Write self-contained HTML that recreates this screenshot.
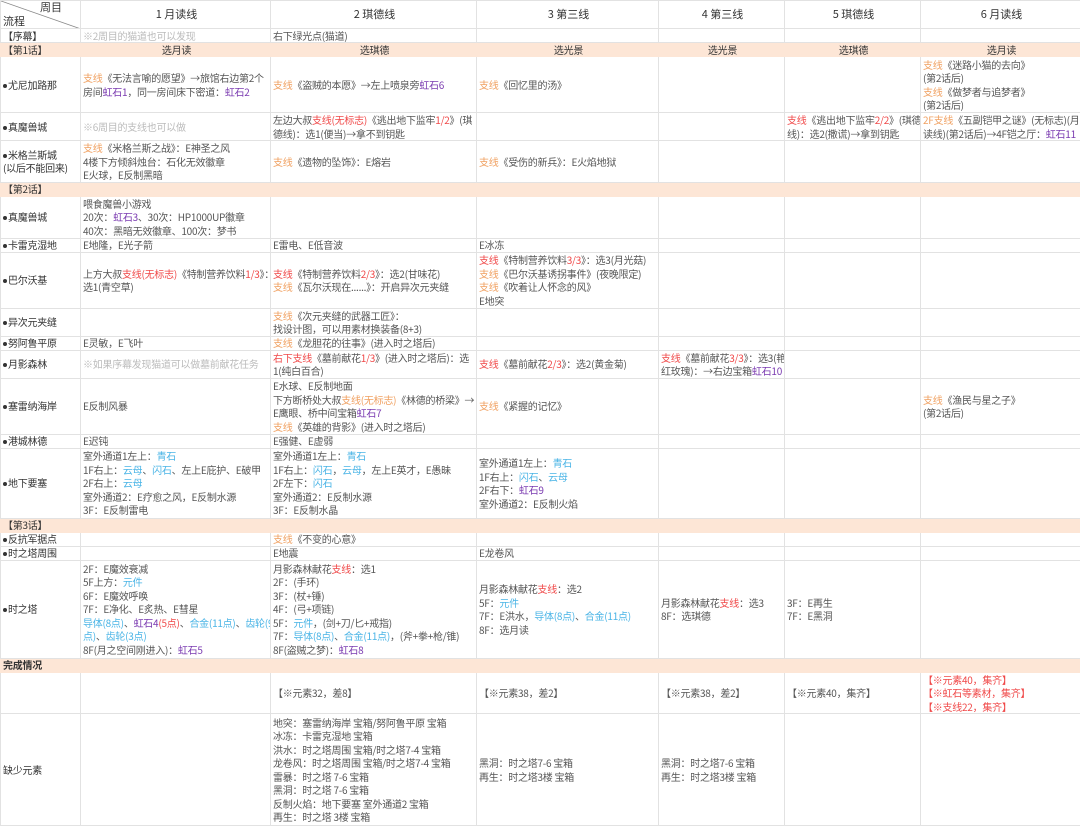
<!DOCTYPE html>
<html><head><meta charset="utf-8">
<style>
html,body{margin:0;padding:0;background:#fff;}
body{width:1080px;height:825px;overflow:hidden;font-family:"Noto Sans CJK SC",sans-serif;font-size:10px;color:#555;}
table{border-collapse:collapse;table-layout:fixed;width:1080px;}
td{border:1px solid #e2e2e2;padding:0 0 0 2px;vertical-align:middle;line-height:13.5px;white-space:nowrap;overflow:hidden;letter-spacing:-0.25px;}
tr.s td{line-height:12px;}
tr.sec td{background:#fde6d6;border-color:#fde6d6;color:#333;line-height:12px;}
.c{text-align:center;}
.o{color:#f0a060;}
.r{color:#f04848;}
.p{color:#7a3ab0;}
.b{color:#4ab4e6;}
.g{color:#bbb;}
.h td{font-size:11px;color:#333;text-align:center;letter-spacing:0;}
.first{color:#333;}
i{font-style:normal;display:inline-block;width:4px;height:4px;border-radius:50%;background:#333;margin:0 1px 1px 0;vertical-align:middle;}
</style></head><body>
<table>
<colgroup><col style="width:80px"><col style="width:190px"><col style="width:206px"><col style="width:182px"><col style="width:126px"><col style="width:136px"><col style="width:160px"></colgroup>
<tr class="h" style="height:28px"><td style="position:relative;padding:0;">
<svg width="80" height="28" style="position:absolute;left:0;top:0"><line x1="0" y1="0" x2="80" y2="28" stroke="#888" stroke-width="0.8"/></svg>
<span style="position:absolute;right:18px;top:0px;line-height:12px">周目</span><span style="position:absolute;left:2px;top:14px;line-height:12px">流程</span></td>
<td>1 月读线</td><td>2 琪德线</td><td>3 第三线</td><td>4 第三线</td><td>5 琪德线</td><td>6 月读线</td></tr>
<tr class="s" style="height:14px"><td class="first">【序幕】</td><td class="g">※2周目的猫道也可以发现</td><td>右下绿光点(猫道)</td><td></td><td></td><td></td><td></td></tr>
<tr class="sec" style="height:14px"><td>【第1话】</td><td class="c">选月读</td><td class="c">选琪德</td><td class="c">选光景</td><td class="c">选光景</td><td class="c">选琪德</td><td class="c">选月读</td></tr>
<tr style="height:56px"><td class="first"><i></i>尤尼加路那</td><td><span class="o">支线</span>《无法言喻的愿望》→旅馆右边第2个<br>房间<span class="p">虹石1</span>，同一房间床下密道：<span class="p">虹石2</span></td><td><span class="o">支线</span>《盗贼的本愿》→左上喷泉旁<span class="p">虹石6</span></td><td><span class="o">支线</span>《回忆里的汤》</td><td></td><td></td><td><span class="o">支线</span>《迷路小猫的去向》<br>(第2话后)<br><span class="o">支线</span>《做梦者与追梦者》<br>(第2话后)</td></tr>
<tr style="height:28px"><td class="first"><i></i>真魔兽城</td><td class="g">※6周目的支线也可以做</td><td>左边大叔<span class="r">支线(无标志)</span>《逃出地下监牢<span class="r">1/2</span>》(琪<br>德线)：选1(便当)→拿不到钥匙</td><td></td><td></td><td><span class="r">支线</span>《逃出地下监牢<span class="r">2/2</span>》(琪德<br>线)：选2(撒谎)→拿到钥匙</td><td><span class="o">2F支线</span>《五副铠甲之谜》(无标志)(月<br>读线)(第2话后)→4F铠之厅：<span class="p">虹石11</span></td></tr>
<tr style="height:41px"><td class="first"><i></i>米格兰斯城<br>(以后不能回来)</td><td><span class="o">支线</span>《米格兰斯之战》：E神圣之风<br>4楼下方倾斜烛台：石化无效徽章<br>E火球，E反制黑暗</td><td><span class="o">支线</span>《遗物的坠饰》：E熔岩</td><td><span class="o">支线</span>《受伤的新兵》：E火焰地狱</td><td></td><td></td><td></td></tr>
<tr class="sec" style="height:14px"><td>【第2话】</td><td></td><td></td><td></td><td></td><td></td><td></td></tr>
<tr style="height:42px"><td class="first"><i></i>真魔兽城</td><td>喂食魔兽小游戏<br>20次：<span class="p">虹石3</span>、30次：HP1000UP徽章<br>40次：黑暗无效徽章、100次：梦书</td><td></td><td></td><td></td><td></td><td></td></tr>
<tr class="s" style="height:14px"><td class="first"><i></i>卡雷克湿地</td><td>E地隆，E光子箭</td><td>E雷电、E低音波</td><td>E冰冻</td><td></td><td></td><td></td></tr>
<tr style="height:56px"><td class="first"><i></i>巴尔沃基</td><td>上方大叔<span class="r">支线(无标志)</span>《特制营养饮料<span class="r">1/3</span>》：<br>选1(青空草)</td><td><span class="r">支线</span>《特制营养饮料<span class="r">2/3</span>》：选2(甘味花)<br><span class="o">支线</span>《瓦尔沃现在......》：开启异次元夹缝</td><td><span class="r">支线</span>《特制营养饮料<span class="r">3/3</span>》：选3(月光菇)<br><span class="o">支线</span>《巴尔沃基诱拐事件》(夜晚限定)<br><span class="o">支线</span>《吹着让人怀念的风》<br>E地突</td><td></td><td></td><td></td></tr>
<tr style="height:28px"><td class="first"><i></i>异次元夹缝</td><td></td><td><span class="o">支线</span>《次元夹缝的武器工匠》：<br>找设计图，可以用素材换装备(8+3)</td><td></td><td></td><td></td><td></td></tr>
<tr class="s" style="height:14px"><td class="first"><i></i>努阿鲁平原</td><td>E灵敏，E飞叶</td><td><span class="o">支线</span>《龙胆花的往事》(进入时之塔后)</td><td></td><td></td><td></td><td></td></tr>
<tr style="height:28px"><td class="first"><i></i>月影森林</td><td class="g">※如果序幕发现猫道可以做墓前献花任务</td><td><span class="r">右下支线</span>《墓前献花<span class="r">1/3</span>》(进入时之塔后)：选<br>1(纯白百合)</td><td><span class="r">支线</span>《墓前献花<span class="r">2/3</span>》：选2(黄金菊)</td><td><span class="r">支线</span>《墓前献花<span class="r">3/3</span>》：选3(艳<br>红玫瑰)：→右边宝箱<span class="p">虹石10</span></td><td></td><td></td></tr>
<tr style="height:56px"><td class="first"><i></i>塞雷纳海岸</td><td>E反制风暴</td><td>E水球、E反制地面<br>下方断桥处大叔<span class="o">支线(无标志)</span>《林德的桥梁》→<br>E鹰眼、桥中间宝箱<span class="p">虹石7</span><br><span class="o">支线</span>《英雄的背影》(进入时之塔后)</td><td><span class="o">支线</span>《紧握的记忆》</td><td></td><td></td><td><span class="o">支线</span>《渔民与星之子》<br>(第2话后)</td></tr>
<tr class="s" style="height:14px"><td class="first"><i></i>港城林德</td><td>E迟钝</td><td>E强健、E虚弱</td><td></td><td></td><td></td><td></td></tr>
<tr style="height:70px"><td class="first"><i></i>地下要塞</td><td>室外通道1左上：<span class="b">青石</span><br>1F右上：<span class="b">云母</span>、<span class="b">闪石</span>、左上E庇护、E破甲<br>2F右上：<span class="b">云母</span><br>室外通道2：E疗愈之风，E反制水源<br>3F：E反制雷电</td><td>室外通道1左上：<span class="b">青石</span><br>1F右上：<span class="b">闪石</span>，<span class="b">云母</span>，左上E英才，E愚昧<br>2F左下：<span class="b">闪石</span><br>室外通道2：E反制水源<br>3F：E反制水晶</td><td>室外通道1左上：<span class="b">青石</span><br>1F右上：<span class="b">闪石</span>、<span class="b">云母</span><br>2F右下：<span class="p">虹石9</span><br>室外通道2：E反制火焰</td><td></td><td></td><td></td></tr>
<tr class="sec" style="height:14px"><td>【第3话】</td><td></td><td></td><td></td><td></td><td></td><td></td></tr>
<tr class="s" style="height:14px"><td class="first"><i></i>反抗军据点</td><td></td><td><span class="o">支线</span>《不变的心意》</td><td></td><td></td><td></td><td></td></tr>
<tr class="s" style="height:14px"><td class="first"><i></i>时之塔周围</td><td></td><td>E地震</td><td>E龙卷风</td><td></td><td></td><td></td></tr>
<tr style="height:98px"><td class="first"><i></i>时之塔</td><td>2F：E魔效衰减<br>5F上方：<span class="b">元件</span><br>6F：E魔效呼唤<br>7F：E净化、E炙热、E彗星<br><span class="b">导体(8点)</span>、<span class="p">虹石4</span><span class="r">(5点)</span>、<span class="b">合金(11点)</span>、<span class="b">齿轮(9</span><br><span class="b">点)</span>、<span class="b">齿轮(3点)</span><br>8F(月之空间刚进入)：<span class="p">虹石5</span></td><td>月影森林献花<span class="r">支线</span>：选1<br>2F：(手环)<br>3F：(杖+锤)<br>4F：(弓+项链)<br>5F：<span class="b">元件</span>，(剑+刀/匕+戒指)<br>7F：<span class="b">导体(8点)</span>、<span class="b">合金(11点)</span>，(斧+拳+枪/锥)<br>8F(盗贼之梦)：<span class="p">虹石8</span></td><td>月影森林献花<span class="r">支线</span>：选2<br>5F：<span class="b">元件</span><br>7F：E洪水，<span class="b">导体(8点)</span>、<span class="b">合金(11点)</span><br>8F：选月读</td><td>月影森林献花<span class="r">支线</span>：选3<br>8F：选琪德</td><td>3F：E再生<br>7F：E黑洞</td><td></td></tr>
<tr class="sec" style="height:14px"><td><b>完成情况</b></td><td></td><td></td><td></td><td></td><td></td><td></td></tr>
<tr style="height:41px"><td></td><td></td><td>【※元素32，差8】</td><td>【※元素38，差2】</td><td>【※元素38，差2】</td><td>【※元素40，集齐】</td><td class="r">【※元素40，集齐】<br>【※虹石等素材，集齐】<br>【※支线22，集齐】</td></tr>
<tr style="height:112px"><td class="first">缺少元素</td><td></td><td>地突：塞雷纳海岸 宝箱/努阿鲁平原 宝箱<br>冰冻：卡雷克湿地 宝箱<br>洪水：时之塔周围 宝箱/时之塔7-4 宝箱<br>龙卷风：时之塔周围 宝箱/时之塔7-4 宝箱<br>雷暴：时之塔 7-6 宝箱<br>黑洞：时之塔 7-6 宝箱<br>反制火焰：地下要塞 室外通道2 宝箱<br>再生：时之塔 3楼 宝箱</td><td>黑洞：时之塔7-6 宝箱<br>再生：时之塔3楼 宝箱</td><td>黑洞：时之塔7-6 宝箱<br>再生：时之塔3楼 宝箱</td><td></td><td></td></tr>
</table>
</body></html>
